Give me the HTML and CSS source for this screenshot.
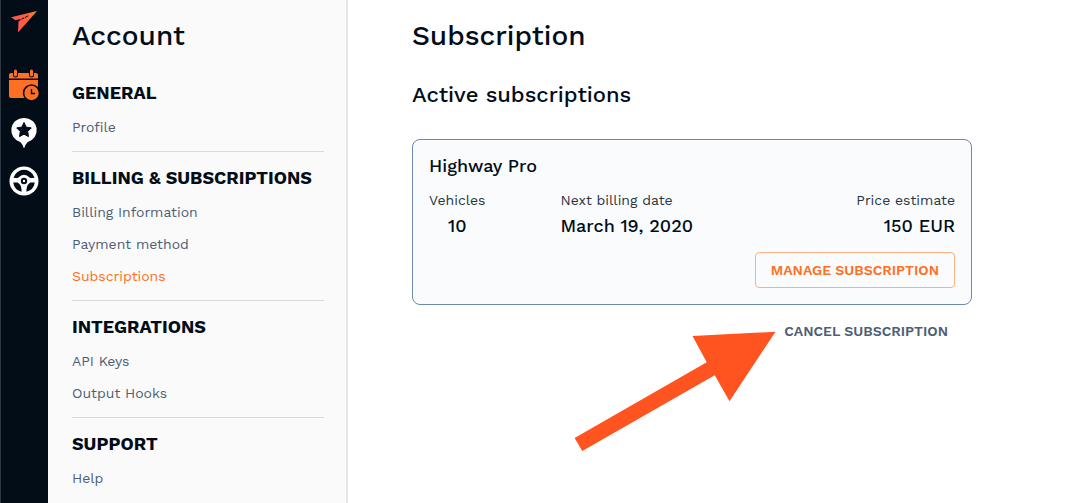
FILE: index.html
```html
<!DOCTYPE html>
<html lang="en">
<head>
<meta charset="utf-8">
<meta name="viewport" content="width=device-width, initial-scale=1">
<title>Subscription</title>
<link rel="stylesheet" href="styles.css">
</head>
<body>
<div class="app">
  <nav class="rail" aria-label="Main">
    <a class="rail-logo" href="#" aria-label="Home">
      <svg viewBox="0 0 48 61" width="48" height="61" aria-hidden="true">
        <defs>
          <linearGradient id="brand" x1="0" y1="0" x2="1" y2="0">
            <stop offset="0" stop-color="#ff5050"/>
            <stop offset="0.6" stop-color="#ff6040"/>
            <stop offset="1" stop-color="#ff8a1e"/>
          </linearGradient>
        </defs>
        <path fill="url(#brand)" d="M37 11 11 17.200 15.500 20.200 20 19 18.500 21.500 18 32.400Z"/>
        <path fill="none" stroke="#020d18" stroke-width="1" stroke-dasharray="3 1" d="M18 21 29 15.500"/>
      </svg>
    </a>
    <a class="rail-link" href="#" aria-label="Schedule">
      <svg viewBox="0 0 48 48" width="48" height="48" aria-hidden="true">
        <path fill="#ff6f24" d="M11 12H36Q38 12 38 14V17.500H9V14Q9 12 11 12ZM9 19H38V37H11Q9 37 9 35Z"/>
        <path stroke="#020d18" stroke-width="5" stroke-linecap="round" d="M15.500 10V14M31.500 10V14"/>
        <path stroke="#ff6f24" stroke-width="3" stroke-linecap="round" d="M15.500 10V14M31.500 10V14"/>
        <circle cx="31.500" cy="32" r="8.700" fill="#020d18"/>
        <circle cx="31.500" cy="32" r="7.200" fill="#ff6f24"/>
        <path fill="none" stroke="#020d18" stroke-width="1.400" d="M31.500 28V32.500H35"/>
      </svg>
    </a>
    <a class="rail-link" href="#" aria-label="Places">
      <svg viewBox="0 0 48 48" width="48" height="48" aria-hidden="true">
        <path fill="#fff" d="M24 9A12.300 12.300 0 0 1 27.500 33.200Q25.500 35 24 39.500 22.500 35 20.500 33.200A12.300 12.300 0 0 1 24 9Z"/>
        <path fill="#020d18" stroke="#020d18" stroke-linejoin="round" d="M24 13.500 26.300 18.200 31.300 18.900 27.700 22.500 28.500 27.600 24 25.200 19.500 27.600 20.300 22.500 16.700 18.900 21.700 18.200Z"/>
      </svg>
    </a>
    <a class="rail-link" href="#" aria-label="Drivers">
      <svg viewBox="0 0 48 48" width="48" height="48" aria-hidden="true">
        <circle cx="24" cy="24" r="14.500" fill="#fff"/>
        <path fill="#020d18" d="M13.500 20.500A11 11 0 0 1 34.500 20.500Q32 21.500 29.500 20.500 27 17.800 24 17.800T18.500 20.500Q16 21.500 13.500 20.500ZM13.200 25.500H17.500Q21.500 27 21.700 34.700A11 11 0 0 1 13.200 25.500ZM34.800 25.500H30.500Q26.500 27 26.300 34.700A11 11 0 0 0 34.800 25.500Z"/>
        <circle cx="24" cy="24" r="4.800" fill="#fff"/>
        <circle cx="24" cy="24" r="3.200" fill="#020d18"/>
        <circle cx="24" cy="24" r="1.200" fill="#fff"/>
      </svg>
    </a>
  </nav>

  <aside class="sidebar">
    <h1 class="title">Account</h1>
    <nav class="menu" aria-label="Account">
      <section class="group">
        <h2 class="group-title">GENERAL</h2>
        <a class="item" href="#">Profile</a>
      </section>
      <section class="group">
        <h2 class="group-title">BILLING &amp; SUBSCRIPTIONS</h2>
        <a class="item" href="#">Billing Information</a>
        <a class="item" href="#">Payment method</a>
        <a class="item item-active" href="#" aria-current="page">Subscriptions</a>
      </section>
      <section class="group">
        <h2 class="group-title">INTEGRATIONS</h2>
        <a class="item" href="#">API Keys</a>
        <a class="item" href="#">Output Hooks</a>
      </section>
      <section class="group">
        <h2 class="group-title">SUPPORT</h2>
        <a class="item" href="#">Help</a>
      </section>
    </nav>
  </aside>

  <main class="content">
    <h1 class="title">Subscription</h1>
    <h2 class="subtitle">Active subscriptions</h2>
    <div class="plan-area">
      <article class="plan">
        <h3 class="plan-name">Highway Pro</h3>
        <dl class="facts">
          <div class="fact fact-center"><dt>Vehicles</dt><dd>10</dd></div>
          <div class="fact"><dt>Next billing date</dt><dd>March 19, 2020</dd></div>
          <div class="fact fact-end"><dt>Price estimate</dt><dd>150 EUR</dd></div>
        </dl>
        <button class="button button-outline" type="button">MANAGE SUBSCRIPTION</button>
      </article>
      <button class="button button-plain" type="button">CANCEL SUBSCRIPTION</button>
      <svg class="pointer" viewBox="574 331 202 120" width="202" height="120" aria-hidden="true">
        <path fill="#ff5420" d="M775.500 331.700 692.500 336 706.700 362.300 574.600 438 582.300 451 714.700 375.300 729.500 401.300Z"/>
      </svg>
    </div>
  </main>
</div>
</body>
</html>
```
FILE: styles.css
```css
* {
  box-sizing: border-box;
}

body {
  margin: 0;
  background: #fff;
  color: #020d18;
  font-family: "Work Sans", Inter, sans-serif;
  font-size: 14px;
}

h1, h2, h3, dl, dd {
  margin: 0;
}

a {
  text-decoration: none;
}

.app {
  display: flex;
  min-height: 100vh;
}

.rail {
  flex: 0 0 48px;
  background: linear-gradient(to right, #2c3742 1px, #020d18 1px);
}

.rail-logo, .rail-link, .rail svg {
  display: block;
}

.sidebar {
  flex: 0 0 300px;
  padding: 20px 22px 8px 24px;
  border-right: 2px solid #e6e6e6;
  background: #fafafa;
}

.title {
  font-size: 28px;
  font-weight: 500;
  line-height: 32px;
}

.menu {
  margin-top: 29px;
}

.group + .group {
  margin-top: 8px;
  padding-top: 14px;
  border-top: 1px solid #d9dadb;
}

.group-title {
  margin-bottom: 6px;
  font-size: 18px;
  font-weight: 700;
  line-height: 24px;
  white-space: nowrap;
}

.item {
  display: block;
  color: #4f5d75;
  font-size: 14px;
  line-height: 32px;
}

.item-active {
  color: #ff6f24;
}

.content {
  flex: 1;
  min-width: 0;
  padding: 20px 64px 48px;
}

.subtitle {
  margin: 27px 0 28px;
  font-size: 22px;
  font-weight: 500;
  line-height: 32px;
}

.plan-area {
  position: relative;
  display: flex;
  flex-direction: column;
  max-width: 560px;
}

.plan {
  display: flex;
  flex-direction: column;
  padding: 14px 16px 16px;
  border: 1px solid #6e89ae;
  border-radius: 8px;
  background: #fafbfd;
}

.plan-name {
  font-size: 18px;
  font-weight: 500;
  line-height: 24px;
}

.facts {
  display: grid;
  grid-template-columns: 1fr 2fr 1fr;
  margin-top: 12px;
}

.fact {
  justify-self: start;
}

.fact-center {
  text-align: center;
}

.fact-end {
  justify-self: end;
  text-align: right;
}

.fact dt {
  color: #2b333d;
  font-size: 14px;
  line-height: 20px;
}

.fact dd {
  margin-top: 4px;
  font-size: 18px;
  font-weight: 500;
  line-height: 24px;
}

.button {
  align-self: flex-end;
  height: 36px;
  border: 1px solid transparent;
  border-radius: 4px;
  background: none;
  font: 600 14px/20px "Work Sans", Inter, sans-serif;
  white-space: nowrap;
}

.button-outline {
  margin-top: 14px;
  padding: 0 15px;
  border-color: #ffb081;
  color: #ff6f24;
}

.button-plain {
  margin: 8px 8px 0 0;
  padding: 0 15px;
  color: #4f5d75;
}

.pointer {
  position: absolute;
  top: 192px;
  right: 196px;
}
```
